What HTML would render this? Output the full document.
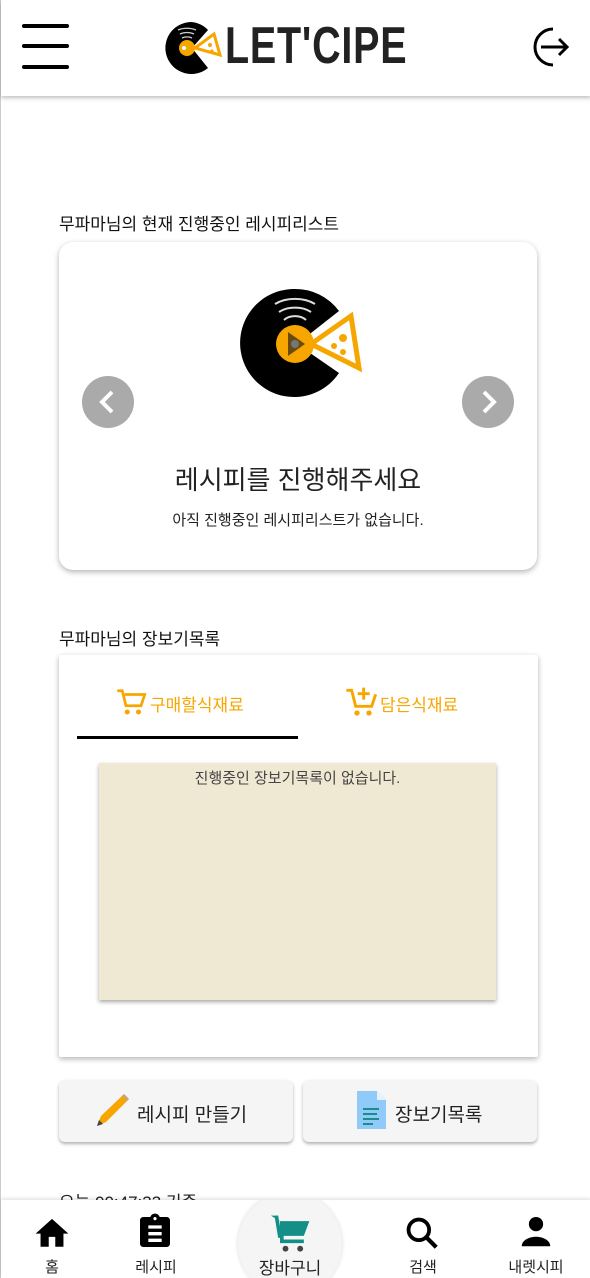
<!DOCTYPE html>
<html><head><meta charset="utf-8"><style>
*{margin:0;padding:0;box-sizing:border-box}
html,body{width:590px;height:1278px;overflow:hidden}
body{background:#fff;font-family:"Liberation Sans","Noto Sans CJK KR",sans-serif;position:relative;color:#222;border-left:1px solid #ccc}
.hdr{position:absolute;left:0;top:0;width:590px;height:96px;background:#fff;box-shadow:0 2px 4px rgba(0,0,0,.25);z-index:2}
.abs{position:absolute}
.t{font-size:17px;color:#111}
.card{position:absolute;background:#fff;box-shadow:0 2px 6px rgba(0,0,0,.3)}
.arr{position:absolute;width:52px;height:52px;border-radius:50%;background:#aaa}
.btn{position:absolute;top:1080px;height:62px;background:#f5f5f5;border-radius:6px;box-shadow:0 2px 3px rgba(0,0,0,.3);font-size:19px;color:#222}
.nav{position:absolute;left:0;top:1200px;width:590px;height:78px;background:#fff;box-shadow:0 -1px 4px rgba(0,0,0,.15);overflow:hidden}
.nl{position:absolute;top:56px;font-size:15px;color:#222;transform:translateX(-50%);white-space:nowrap}
</style></head><body>
<div class="hdr">
<svg class="abs" style="left:20px;top:22px" width="50" height="50"><g stroke="#000" stroke-width="4" stroke-linecap="round"><line x1="3" y1="4" x2="46" y2="4"/><line x1="3" y1="24" x2="46" y2="24"/><line x1="3" y1="45" x2="46" y2="45"/></g></svg>
<svg class="abs" style="left:163px;top:21px" width="60" height="54" viewBox="0 0 60 54"><path d="M27 1A26 26 0 1 0 44 47L28 27L44 9A26 26 0 0 0 27 1Z" fill="#000"/><circle cx="23" cy="27" r="8" fill="#f7a600"/><circle cx="20" cy="27" r="2" fill="#fff"/><path d="M31 27L50 13L56 34Z" fill="#fff" stroke="#f7a600" stroke-width="3"/><circle cx="46" cy="24" r="2" fill="#f7a600"/><circle cx="48" cy="30" r="1.6" fill="#f7a600"/><path d="M16 13a12 8 0 0 1 14 0M14 9a16 10 0 0 1 18 0M18 17a8 5 0 0 1 10 0" stroke="#ccc" stroke-width="1.3" fill="none"/></svg>
<div class="abs" style="left:224px;top:18px;font-size:52px;font-weight:bold;letter-spacing:1px;transform:scaleX(.76);transform-origin:left;line-height:56px;font-family:'Liberation Sans Narrow','Liberation Sans',sans-serif">LET'CIPE</div>
<svg class="abs" style="left:526px;top:25px" width="46" height="44"><path d="M26 4A17 17 0 1 0 26 40" stroke="#000" stroke-width="3" fill="none"/><path d="M14 22H40M32 14L40 22L32 30" stroke="#000" stroke-width="3" fill="none"/></svg>
</div>
<div class="abs t" style="left:58px;top:210px">무파마님의 현재 진행중인 레시피리스트</div>
<div class="card" style="left:58px;top:242px;width:478px;height:328px;border-radius:14px">
<svg class="abs" style="left:180px;top:44px" width="124" height="116" viewBox="0 0 124 116"><path d="M55 3A54 54 0 1 0 100 87L58 58L100 25A54 54 0 0 0 55 3Z" fill="#000"/><circle cx="56" cy="58" r="19" fill="#f7a600"/><path d="M49 46L49 70L66 58Z" fill="#6b4a10"/><circle cx="56" cy="58" r="4" fill="#777"/><path d="M72 58L112 30L120 82Z" fill="#fff" stroke="#f7a600" stroke-width="5"/><circle cx="104" cy="52" r="4" fill="#f7a600"/><circle cx="95" cy="60" r="3" fill="#f7a600"/><circle cx="104" cy="66" r="3" fill="#f7a600"/><path d="M36 18a30 20 0 0 1 40 0M40 26a22 14 0 0 1 32 0M45 34a14 10 0 0 1 22 0" stroke="#ddd" stroke-width="2" fill="none"/></svg>
<div class="arr" style="left:23px;top:134px"><svg width="52" height="52"><path d="M30 16L20 26L30 36" stroke="#fff" stroke-width="4" fill="none"/></svg></div>
<div class="arr" style="left:403px;top:134px"><svg width="52" height="52"><path d="M22 16L32 26L22 36" stroke="#fff" stroke-width="4" fill="none"/></svg></div>
<div class="abs" style="left:0;width:478px;top:218px;text-align:center;font-size:26px;color:#222">레시피를 진행해주세요</div>
<div class="abs" style="left:0;width:478px;top:267px;text-align:center;font-size:15px;color:#222">아직 진행중인 레시피리스트가 없습니다.</div>
</div>
<div class="abs t" style="left:58px;top:625px">무파마님의 장보기목록</div>
<div class="card" style="left:58px;top:655px;width:479px;height:402px;border-radius:2px">
<svg class="abs" style="left:56px;top:32px" width="32" height="30" viewBox="0 0 24 24"><path d="M1 3h4l3 12h12l3-9H7" stroke="#f7a600" stroke-width="2.2" fill="none"/><circle cx="9" cy="20" r="2" fill="#f7a600"/><circle cx="18" cy="20" r="2" fill="#f7a600"/></svg>
<div class="abs" style="left:91px;top:36px;font-size:17px;color:#f7a600">구매할식재료</div>
<svg class="abs" style="left:286px;top:30px" width="32" height="32" viewBox="0 0 24 24"><path d="M1 4h4l3 12h12l3-9" stroke="#f7a600" stroke-width="2.2" fill="none"/><path d="M14 2v9M9.5 6.5h9" stroke="#f7a600" stroke-width="2.2"/><circle cx="9" cy="21" r="2" fill="#f7a600"/><circle cx="18" cy="21" r="2" fill="#f7a600"/></svg>
<div class="abs" style="left:321px;top:36px;font-size:17px;color:#f7a600">담은식재료</div>
<div class="abs" style="left:18px;top:81px;width:221px;height:3px;background:#000"></div>
<div class="abs" style="left:40px;top:108px;width:397px;height:237px;background:#efe8d2;box-shadow:0 2px 4px rgba(0,0,0,.35)"><div style="text-align:center;font-size:15px;color:#444;margin-top:4px">진행중인 장보기목록이 없습니다.</div></div>
</div>
<div class="btn" style="left:58px;width:234px">
<svg class="abs" style="left:34px;top:12px" width="38" height="38" viewBox="0 0 38 38"><path d="M4 34L8 24L30 3L35 8L13 30Z" fill="#f7a600"/><path d="M4 34L6 28L10 32Z" fill="#444"/><path d="M30 3L35 8" stroke="#c9a37a" stroke-width="3"/></svg>
<div class="abs" style="left:78px;top:20px">레시피 만들기</div></div>
<div class="btn" style="left:302px;width:234px">
<svg class="abs" style="left:54px;top:11px" width="30" height="40" viewBox="0 0 30 40"><path d="M0 0H20L29 9V38H0Z" fill="#90caf9"/><path d="M20 0V9H29Z" fill="#e3f2fd"/><path d="M6 18H22M6 23H20M6 28H22M6 33H16" stroke="#1a8c8c" stroke-width="2"/></svg>
<div class="abs" style="left:92px;top:20px">장보기목록</div></div>
<div class="abs" style="left:58px;top:1188px;font-size:17px;color:#222">오늘 00:47:33 기준</div>
<div class="nav">
<div class="abs" style="left:237px;top:-8px;width:104px;height:104px;border-radius:50%;background:#f5f5f5;box-shadow:0 0 4px rgba(0,0,0,.15)"></div>
<svg class="abs" style="left:31px;top:14px" width="40" height="36" viewBox="0 0 24 22"><path d="M10 20v-6h4v6h5v-8h3L12 3 2 12h3v8z" fill="#000"/></svg>
<svg class="abs" style="left:134px;top:10px" width="40" height="44" viewBox="0 0 24 24"><path d="M19 3h-4.2C14.4 1.8 13.3 1 12 1s-2.4.8-2.8 2H5c-1.1 0-2 .9-2 2v14c0 1.1.9 2 2 2h14c1.1 0 2-.9 2-2V5c0-1.1-.9-2-2-2zm-7 0c.55 0 1 .45 1 1s-.45 1-1 1-1-.45-1-1 .45-1 1-1zM8 8h8v2H8zm0 4h8v2H8zm0 4h8v2H8z" fill="#000"/></svg>
<svg class="abs" style="left:268px;top:12px" width="44" height="44" viewBox="0 0 24 24"><path d="M1 2h3l1 3h17l-3 8H8v2h11v2H6V5" fill="#138f88"/><path d="M4 2L6 14" stroke="#138f88" stroke-width="2"/><circle cx="9" cy="20" r="1.6" fill="#444"/><circle cx="17" cy="20" r="1.6" fill="#444"/></svg>
<svg class="abs" style="left:402px;top:14px" width="38" height="38" viewBox="0 0 24 24"><circle cx="10" cy="10" r="6.5" stroke="#000" stroke-width="2.4" fill="none"/><path d="M15 15L21 21" stroke="#000" stroke-width="2.6"/></svg>
<svg class="abs" style="left:515px;top:13px" width="40" height="38" viewBox="0 0 24 24"><circle cx="12" cy="7" r="4.5" fill="#000"/><path d="M3 21c0-4 5-6 9-6s9 2 9 6z" fill="#000"/></svg>
<div class="nl" style="left:51px">홈</div>
<div class="nl" style="left:155px">레시피</div>
<div class="nl" style="left:289px;font-size:17px;top:54px">장바구니</div>
<div class="nl" style="left:422px">검색</div>
<div class="nl" style="left:535px">내렛시피</div>
</div>
</body></html>
